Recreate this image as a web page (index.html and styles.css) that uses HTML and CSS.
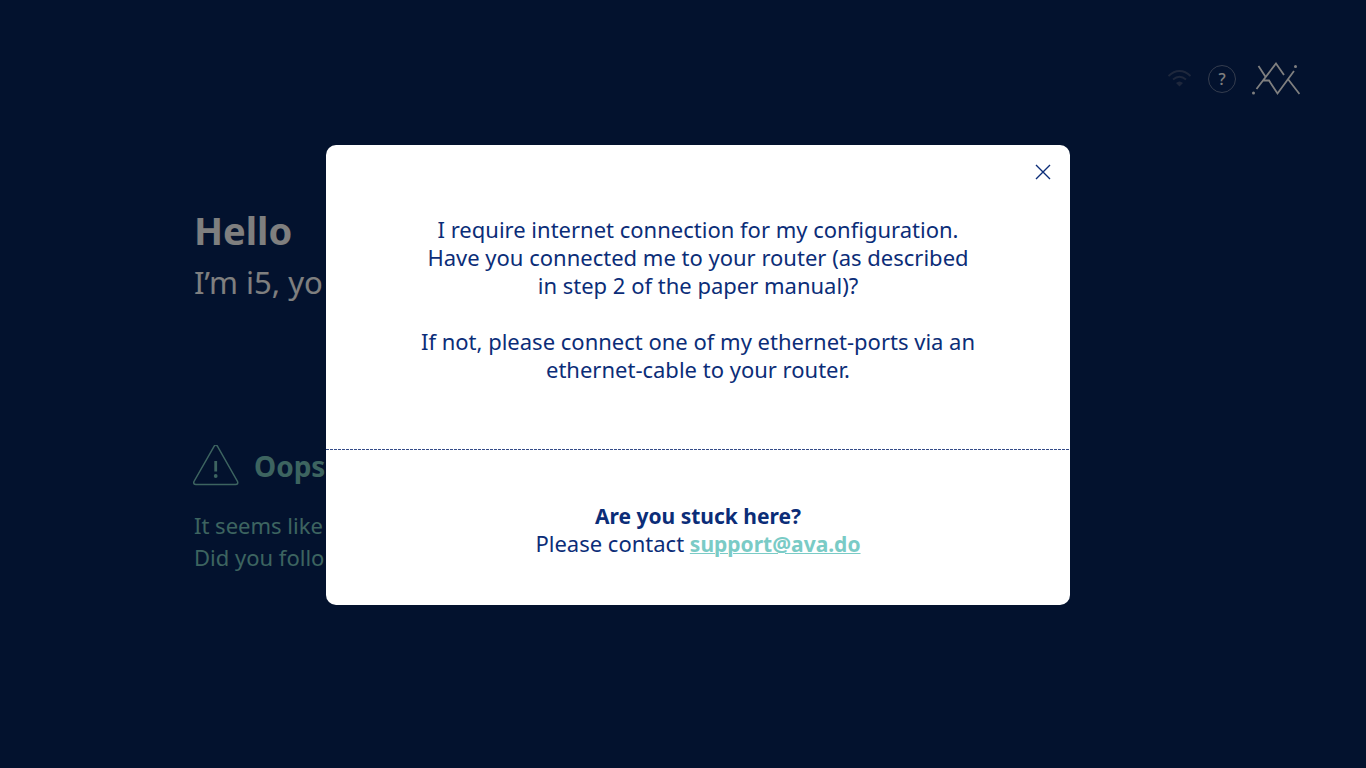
FILE: index.html
```html
<!DOCTYPE html>
<html lang="en">
<head>
  <meta charset="utf-8">
  <meta name="viewport" content="width=device-width, initial-scale=1">
  <title>Hello</title>
  <link rel="stylesheet" href="styles.css">
</head>
<body>
  <div class="page">
    <header class="topbar">
      <svg class="wifi" viewBox="0 0 24 18" aria-hidden="true">
        <path d="M.500 6Q5.500 1 11.500 1T22.500 6M5 9.500Q11.500 4 18 9.500" fill="none" stroke="currentColor" stroke-width="1.800"/>
        <path d="M8 13Q11.500 10 15 13L11.500 16.500Z" fill="currentColor"/>
      </svg>
      <button class="help" type="button" aria-label="Help">?</button>
      <svg class="logo" viewBox="0 0 48 34" aria-hidden="true">
        <path d="M6.500 4L14 15.500M4.500 27L24 1.500L32 13M10.500 18.500H17L25.500 31.500L42 9M35.500 16.500L47.500 32" fill="none" stroke="currentColor" stroke-width="1.800"/>
        <circle cx="1.500" cy="31" r="1.500" fill="currentColor"/>
        <circle cx="43.500" cy="4.500" r="1.500" fill="currentColor"/>
      </svg>
    </header>
    <main class="content">
      <h1 class="title">Hello</h1>
      <p class="intro">I’m i5, yo</p>
      <section class="notice">
        <h2 class="notice-title">
          <svg class="warning" viewBox="0 0 46 42" aria-hidden="true">
            <path d="M21.200 1.200Q22.800 -1 24.400 1.200L44.500 36.500Q45.500 39.500 42.500 39.500H3Q0 39.500 1 36.500Z" fill="none" stroke="currentColor" stroke-width="1.500"/>
            <path d="M22.700 16V26.500" stroke="currentColor" stroke-width="2.800"/>
            <circle cx="22.700" cy="31" r="1.900" fill="currentColor"/>
          </svg>
          Oops
        </h2>
        <p class="notice-text">It seems like<br>Did you follo</p>
      </section>
    </main>
  </div>
  <div class="overlay">
    <div class="modal" role="dialog" aria-modal="true" aria-label="Internet connection">
      <button class="close" type="button" aria-label="Close">
        <svg class="close-icon" viewBox="0 0 16 16" aria-hidden="true">
          <path d="M1 1L15 15M15 1L1 15" fill="none" stroke="currentColor" stroke-width="1.400"/>
        </svg>
      </button>
      <div class="message">
        <p>I require internet connection for my configuration.<br>Have you connected me to your router (as described<br>in step 2 of the paper manual)?</p>
        <p>If not, please connect one of my ethernet-ports via an<br>ethernet-cable to your router.</p>
      </div>
      <div class="support">
        <p><strong class="question">Are you stuck here?</strong><br>Please contact <a class="mail" href="mailto:support@ava.do">support@ava.do</a></p>
      </div>
    </div>
  </div>
</body>
</html>
```
FILE: styles.css
```css
* {
  box-sizing: border-box;
}

body {
  margin: 0;
  font-family: "Noto Sans", "Open Sans", sans-serif;
  background: #06245c;
  color: #fff;
}

h1, h2, p {
  margin: 0;
}

button {
  padding: 0;
  border: 0;
  background: none;
  color: inherit;
  font: inherit;
  cursor: pointer;
}

.page {
  min-height: 100vh;
}

.topbar {
  display: flex;
  justify-content: flex-end;
  align-items: center;
  gap: 16px;
  padding: 62px 66px 0;
}

.wifi {
  width: 24px;
  height: 18px;
  color: #3c4f78;
}

.help {
  width: 28px;
  height: 28px;
  border: 1px solid #6a7a9c;
  border-radius: 50%;
  font-size: 16px;
  font-weight: 500;
  line-height: 24px;
}

.logo {
  width: 48px;
  height: 34px;
}

.content {
  padding: 106px 194px 0;
}

.title {
  font-size: 38px;
  line-height: 56px;
}

.intro {
  font-size: 31px;
  line-height: 48px;
}

.notice {
  margin-top: 136px;
  color: #7ac8c0;
}

.notice-title {
  display: flex;
  align-items: center;
  gap: 15px;
  margin-left: -1px;
  font-size: 28px;
  line-height: 48px;
}

.warning {
  width: 46px;
  height: 42px;
}

.notice-text {
  margin-top: 19px;
  font-size: 22px;
  line-height: 32px;
}

.overlay {
  position: fixed;
  inset: 0;
  display: flex;
  justify-content: center;
  align-items: center;
  padding: 0 0 18px 30px;
  background: rgba(0, 0, 0, 0.5);
}

.modal {
  position: relative;
  width: 100%;
  max-width: 744px;
  border-radius: 10px;
  background: #fff;
  color: #0b2d78;
  font-size: 22px;
  line-height: 28px;
  text-align: center;
}

.close {
  position: absolute;
  top: 11px;
  right: 11px;
  display: grid;
  place-items: center;
  width: 32px;
  height: 32px;
}

.close-icon {
  width: 16px;
  height: 16px;
}

.message {
  display: grid;
  gap: 28px;
  padding: 70px 40px 66px;
}

.support {
  padding: 52px 40px 48px;
  background: repeating-linear-gradient(90deg, #344b87 0 3px, #fff 3px 4px) top / 100% 1px no-repeat;
}

.question,
.mail {
  font-size: 21px;
  line-height: 1;
}

.mail {
  color: #7acbc6;
  font-weight: 700;
  text-decoration-thickness: 1px;
}
```
